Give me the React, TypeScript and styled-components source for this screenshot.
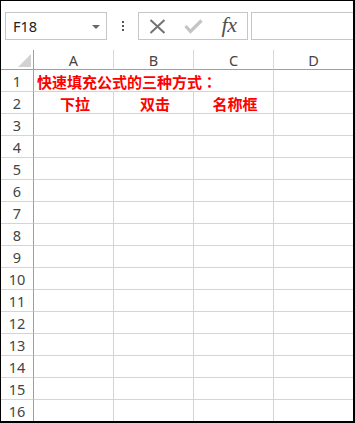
import React from 'react';
import styled, { createGlobalStyle } from 'styled-components';

const GlobalStyle = createGlobalStyle`
  html, body {
    margin: 0;
    padding: 0;
    background: #ffffff;
  }
  * {
    box-sizing: border-box;
  }
`;

const Frame = styled.div`
  width: 355px;
  height: 423px;
  border-style: solid;
  border-color: #000000;
  border-width: 1px 2px 2px 1px;
  background: #ffffff;
  overflow: hidden;
  display: flex;
  flex-direction: column;
`;

const FormulaBar = styled.div`
  height: 49px;
  flex: none;
  display: flex;
  align-items: flex-start;
  padding: 11px 0 0 4px;
`;

const NameBox = styled.div`
  width: 102px;
  height: 28px;
  border: 1px solid #c6c6c6;
  display: flex;
  align-items: center;
  justify-content: space-between;
  padding: 0 6px 0 7px;
  font-family: 'Noto Sans', sans-serif;
  font-size: 14.5px;
  color: #222222;
`;

const DropArrow = styled.span`
  width: 0;
  height: 0;
  border-left: 4px solid transparent;
  border-right: 4px solid transparent;
  border-top: 4px solid #666666;
  margin-top: 1px;
`;

const Grip = styled.div`
  width: 31px;
  height: 28px;
  display: flex;
  flex-direction: column;
  align-items: center;
  justify-content: center;
  gap: 2px;
`;

const GripDot = styled.span`
  width: 2px;
  height: 2px;
  background: #555555;
`;

const ButtonBox = styled.div`
  width: 110px;
  height: 28px;
  border: 1px solid #c6c6c6;
  display: flex;
  align-items: center;
`;

const IconSlot = styled.span`
  width: 36px;
  height: 100%;
  display: flex;
  align-items: center;
  justify-content: center;
`;

const Fx = styled.span`
  font-family: 'Liberation Serif', serif;
  font-style: italic;
  font-size: 22px;
  line-height: 1;
  color: #505050;
  letter-spacing: -0.5px;
  margin-top: -2px;
`;

const FormulaInput = styled.div`
  flex: 1;
  height: 28px;
  margin-left: 3px;
  border: 1px solid #c6c6c6;
  border-right: none;
`;

const Sheet = styled.div`
  display: grid;
  grid-template-columns: 33px 80px 80px 80px 79px;
  grid-template-rows: 20px;
  grid-auto-rows: 22px;
  font-family: 'Noto Sans', sans-serif;
  font-size: 14.5px;
  color: #444444;
`;

const HeadCell = styled.div<{ $last?: boolean }>`
  border-bottom: 1px solid #9f9f9f;
  border-right: ${(p) => (p.$last ? 'none' : '1px solid #d8d8d8')};
  display: flex;
  align-items: center;
  justify-content: center;
  line-height: 1;
  padding-top: 1px;
`;

const Corner = styled.div`
  border-bottom: 1px solid #9f9f9f;
  border-right: 1px solid #9f9f9f;
  display: flex;
  align-items: flex-end;
  justify-content: flex-end;
  padding: 0 2px 2px 0;
`;

const RowHead = styled.div`
  border-right: 1px solid #9f9f9f;
  border-bottom: 1px solid #d4d4d4;
  display: flex;
  align-items: center;
  justify-content: center;
  padding-top: 1px;
`;

const Cell = styled.div<{ $span?: number; $last?: boolean; $center?: boolean }>`
  grid-column: span ${(p) => p.$span ?? 1};
  border-right: ${(p) => (p.$last ? 'none' : '1px solid #d4d4d4')};
  border-bottom: 1px solid #d4d4d4;
  display: flex;
  align-items: center;
  justify-content: ${(p) => (p.$center ? 'center' : 'flex-start')};
  padding: 1px 0 0 3px;
  white-space: nowrap;
  font-family: 'Noto Sans CJK SC', sans-serif;
  font-weight: 700;
  font-size: 15px;
  color: #ff0000;
`;

/* centred full-width colon, as the sheet's font draws it */
const Colon = styled.span`
  font-family: 'Noto Sans CJK JP', sans-serif;
`;

const columns = ['A', 'B', 'C', 'D'];
const rowCount = 16;

const CancelIcon = () => (
  <svg width="17" height="15" viewBox="0 0 17 15">
    <path d="M1.5 1 L15.5 14 M15.5 1 L1.5 14" stroke="#737373" strokeWidth="2" fill="none" />
  </svg>
);

const CheckIcon = () => (
  <svg width="19" height="15" viewBox="0 0 19 15">
    <path d="M1.5 7 L6.5 12.5 L17.5 1.5" stroke="#c4c4c4" strokeWidth="3.2" fill="none" />
  </svg>
);

const CornerMark = () => (
  <svg width="13" height="13" viewBox="0 0 13 13">
    <polygon points="13,0 13,13 0,13" fill="#d2d2d2" />
  </svg>
);

const renderRow = (n: number) => {
  if (n === 1) {
    return (
      <React.Fragment key={n}>
        <RowHead>{n}</RowHead>
        <Cell $span={3}>
          快速填充公式的三种方式<Colon>：</Colon>
        </Cell>
        <Cell $last />
      </React.Fragment>
    );
  }
  if (n === 2) {
    return (
      <React.Fragment key={n}>
        <RowHead>{n}</RowHead>
        <Cell $center>下拉</Cell>
        <Cell $center>双击</Cell>
        <Cell $center>名称框</Cell>
        <Cell $last />
      </React.Fragment>
    );
  }
  return (
    <React.Fragment key={n}>
      <RowHead>{n}</RowHead>
      <Cell />
      <Cell />
      <Cell />
      <Cell $last />
    </React.Fragment>
  );
};

export default function App() {
  return (
    <>
      <GlobalStyle />
      <Frame>
        <FormulaBar>
          <NameBox>
            F18
            <DropArrow />
          </NameBox>
          <Grip>
            <GripDot />
            <GripDot />
            <GripDot />
          </Grip>
          <ButtonBox>
            <IconSlot>
              <CancelIcon />
            </IconSlot>
            <IconSlot>
              <CheckIcon />
            </IconSlot>
            <IconSlot>
              <Fx>fx</Fx>
            </IconSlot>
          </ButtonBox>
          <FormulaInput />
        </FormulaBar>
        <Sheet>
          <Corner>
            <CornerMark />
          </Corner>
          {columns.map((c, i) => (
            <HeadCell key={c} $last={i === columns.length - 1}>
              {c}
            </HeadCell>
          ))}
          {Array.from({ length: rowCount }, (_, i) => renderRow(i + 1))}
        </Sheet>
      </Frame>
    </>
  );
}
